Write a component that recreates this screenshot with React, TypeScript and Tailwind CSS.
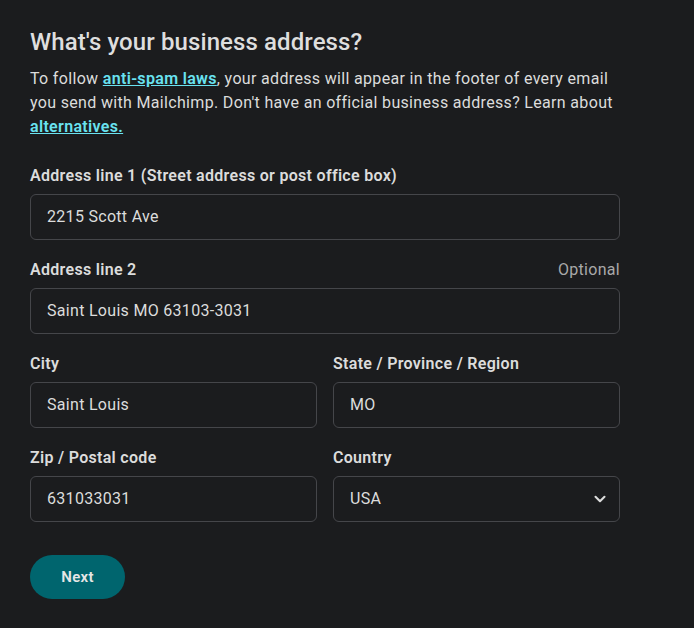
import { ChevronDown } from "lucide-react";

const Field = ({
  label,
  value,
  optional,
  select,
}: {
  label: string;
  value: string;
  optional?: boolean;
  select?: boolean;
}) => (
  <div className="flex flex-col">
    <div className="flex items-center justify-between h-[24px] mb-[6px]">
      <span className="text-[16px] font-semibold text-[#dcdcdc]">{label}</span>
      {optional && <span className="text-[16px] text-[#a9a9a9]">Optional</span>}
    </div>
    <div className="h-[46px] flex items-center justify-between border border-[#45464a] rounded-[6px] px-4 text-[16px] text-[#dcdcdc]">
      <span>{value}</span>
      {select && (
        <ChevronDown className="w-[18px] h-[18px] text-[#dcdcdc] mr-[-6px]" strokeWidth={2.8} />
      )}
    </div>
  </div>
);

export default function App() {
  return (
    <div
      className="min-h-[628px] w-[694px] bg-[#1b1c1e] text-[#dcdcdc] pl-[30px] pt-[26px] tracking-[0.3px]"
      style={{ fontFamily: "Roboto, 'Liberation Sans', sans-serif" }}
    >
      <div className="w-[590px] flex flex-col">
        <h1 className="text-[24px] font-medium leading-[32px] text-[#dedede] tracking-[0.1px]">
          What's your business address?
        </h1>
        <p className="mt-[9px] text-[16px] leading-[24px] text-[#dcdcdc] tracking-[0.33px]">
          To follow{" "}
          <a className="font-semibold text-[#69e2f0] underline">anti-spam laws</a>, your
          address will appear in the footer of every email you send with Mailchimp. Don't have
          an official business address? Learn about{" "}
          <a className="font-semibold text-[#69e2f0] underline">alternatives.</a>
        </p>
        <div className="mt-[25px] flex flex-col gap-[18px]">
          <Field label="Address line 1 (Street address or post office box)" value="2215 Scott Ave" />
          <Field label="Address line 2" value="Saint Louis MO 63103-3031" optional />
          <div className="grid grid-cols-2 gap-4">
            <Field label="City" value="Saint Louis" />
            <Field label="State / Province / Region" value="MO" />
          </div>
          <div className="grid grid-cols-2 gap-4">
            <Field label="Zip / Postal code" value="631033031" />
            <Field label="Country" value="USA" select />
          </div>
        </div>
        <button className="mt-[33px] w-[95px] h-[44px] rounded-full bg-[#00656e] text-[15px] font-semibold text-[#e6e6e6]">
          Next
        </button>
      </div>
    </div>
  );
}
